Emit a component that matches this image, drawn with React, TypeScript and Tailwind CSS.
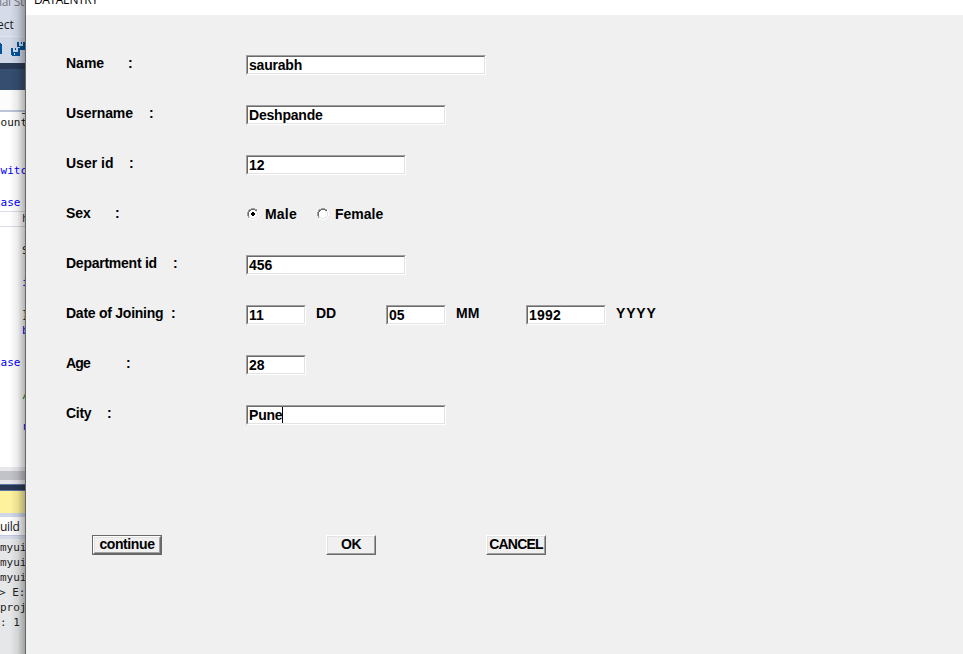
import React from "react";

const sans = "font-['Liberation_Sans',Arial,sans-serif]";
const mono = "font-['DejaVu_Sans_Mono',monospace]";

type FieldProps = { value: string; width: string; tracking?: string; caret?: boolean };

function Field({ value, width, tracking = "", caret = false }: FieldProps) {
  return (
    <div className={`h-5 shrink-0 border border-t-[#a0a0a0] border-l-[#a0a0a0] border-r-white border-b-white ${width}`}>
      <div className="flex h-[18px] border border-t-[#696969] border-l-[#696969] border-r-[#e3e3e3] border-b-[#e3e3e3] bg-white pl-px">
        <span className={`leading-4 ${tracking}`}>{value}</span>
        {caret && <span className="h-4 w-px bg-black" />}
      </div>
    </div>
  );
}

type RowProps = { label: string; labelWidth: string; tracking?: string; children: React.ReactNode };

function Row({ label, labelWidth, tracking = "", children }: RowProps) {
  return (
    <div className="flex h-5 items-start">
      <div className="flex w-[180px] shrink-0 leading-4">
        <span className={`shrink-0 ${labelWidth} ${tracking}`}>{label}</span>
        <span>:</span>
      </div>
      {children}
    </div>
  );
}

function Radio({ checked = false }: { checked?: boolean }) {
  return (
    <svg width="12" height="12" viewBox="0 0 12 12" shapeRendering="crispEdges" className="block shrink-0">
      <path fill="#fff" d="M4 2h4v1h1v1h1v4h-1v1h-1v1h-4v-1h-1v-1h-1v-4h1v-1h1z" />
      <path fill="#a0a0a0" d="M4 0h4v1h-4zM2 1h2v1h-2zM8 1h2v1h-2zM1 2h1v2h-1zM0 4h1v4h-1zM1 8h1v2h-1z" />
      <path fill="#696969" d="M4 1h4v1h-4zM2 2h2v1h-2zM8 2h2v1h-2zM2 3h1v1h-1zM1 4h1v4h-1z" />
      <path fill="#e3e3e3" d="M9 3h1v1h-1zM10 4h1v4h-1zM9 8h1v1h-1zM2 8h1v1h-1zM2 9h2v1h-2zM8 9h2v1h-2zM4 10h4v1h-4z" />
      <path fill="#fff" d="M10 2h1v2h-1zM11 4h1v4h-1zM10 8h1v2h-1zM8 10h2v1h-2zM4 11h4v1h-4zM2 10h2v1h-2z" />
      {checked && <path fill="#000" d="M5 4h2v1h1v2h-1v1h-2v-1h-1v-2h1z" />}
    </svg>
  );
}

type ButtonProps = { label: string; width: string; tracking?: string; focused?: boolean };

function Button({ label, width, tracking = "", focused = false }: ButtonProps) {
  const face = (
    <div className="h-full border border-t-white border-l-white border-r-[#696969] border-b-[#696969]">
      <div className="flex h-full justify-center border border-t-[#e3e3e3] border-l-[#e3e3e3] border-r-[#a0a0a0] border-b-[#a0a0a0]">
        <span className={`${focused ? "leading-[12px]" : "leading-[14px]"} ${tracking}`}>{label}</span>
      </div>
    </div>
  );
  return <div className={`h-5 shrink-0 ${width} ${focused ? "border border-[#696969]" : ""}`}>{face}</div>;
}

function SaveAllIcon() {
  return (
    <svg width="26" height="16" viewBox="0 0 26 16" shapeRendering="crispEdges" className="block">
      <path fill="#00539c" d="M0 2h1v1h1v10h-2z" />
      <path fill="#00539c" d="M17 1h2v4h4v-4h3v8h-6v-3h-3zM11 7h2v4h5v-4h2v8h-8l-1-1z" />
      <path fill="#00539c" d="M21 1h1v2h-1zM15 7h1v2h-1z" />
      <path fill="#d5dbe9" d="M14 12h1v2h-1z" />
    </svg>
  );
}

const code = [
  { text: "count", style: "h-12 -ml-[6px] text-[#111]" },
  { text: "switch", style: "h-8 -ml-[6px] text-[#0000ff]" },
  { text: "case", style: "h-4 -ml-[6px] text-[#0000ff]" },
  { text: "h", style: "h-8 ml-[22px] text-[#333]" },
  { text: "S", style: "h-8 ml-[22px] text-[#111]" },
  { text: "i", style: "h-8 ml-[22px] text-[#0000ff]" },
  { text: "}", style: "h-4 ml-[22px] text-[#111]" },
  { text: "b", style: "h-8 ml-[22px] text-[#0000ff]" },
  { text: "case", style: "h-8 -ml-[6px] text-[#0000ff]" },
  { text: "/", style: "h-8 ml-[22px] text-[#008000]" },
  { text: "r", style: "h-4 ml-[22px] text-[#0000ff]" },
];

function IdeStrip() {
  return (
    <div className="relative h-[654px] w-[26px] shrink-0 overflow-hidden whitespace-pre bg-[#e6e7e8]">
      <div className="h-[15px] overflow-hidden bg-[#d5dbe9] font-['Open_Sans',sans-serif] text-[12px] leading-4 text-[#777]">
        <div className="-mt-[6px] -ml-px tracking-[-0.3px]">ial Studio</div>
      </div>
      <div className="h-[21px] bg-[#d5dbe9] font-['Open_Sans',sans-serif] text-[12px] leading-[19px] text-[#1e1e1e]">
        <div className="-ml-[3px]">ect</div>
      </div>
      <div className="h-[27px] border-t border-[#dfe4ef] bg-[#d0d7e7] pt-[4px]"><SaveAllIcon /></div>
      <div className="h-[6px] bg-[#293955]" />
      <div className="flex h-[21px] justify-end bg-[#364e6f] pt-[6px]"><div className="h-[9px] w-px bg-[#4d6cbd]" /></div>
      <div className="h-[20px] bg-[#fcfcfc]" />
      <div className="h-[2px] bg-[#bcc5d8]" />
      <div className="h-[355px] bg-white">
        <div className="flex h-[3px] justify-end"><div className="mt-px h-px w-[4px] bg-[#444]" /></div>
        <div className={`text-[11px] leading-4 ${mono}`}>
          {code.map((c, i) => (
            <div key={i} className={i === 3 ? "h-8" : ""}>
              {i === 3 ? (
                <div className="h-4 border-y border-[#dcdce8] leading-[14px]">
                  <div className="ml-[22px] text-[#333]">{c.text}</div>
                </div>
              ) : (
                <div className={c.style}>{c.text}</div>
              )}
            </div>
          ))}
        </div>
      </div>
      <div className="h-[4px] bg-[#e8e8ec]" />
      <div className="h-[9px] bg-[#c2c3c9]" />
      <div className="h-[4px] bg-[#e8e8ec]" />
      <div className="h-[7px] border-t border-b border-[#5c76a5] bg-[#293955]" />
      <div className="h-[22px] bg-[#fff29d]" />
      <div className="h-[4px] bg-[#ced6e8]" />
      <div className="h-[18px] bg-[#fcfcfd] font-['Open_Sans',sans-serif] text-[12px] leading-[19px] tracking-[-0.3px] text-[#111]">uild</div>
      <div className="h-[4px] border-t border-[#c0c8e0] bg-[#d4daea]" />
      <div className={`bg-[#e6e7e8] pt-px text-[11px] leading-[15px] text-[#1e1e1e] ${mono}`}>
        <div>myui</div>
        <div>myui</div>
        <div>myui</div>
        <div className="-ml-px">&gt; E:</div>
        <div>proj</div>
        <div>: 1</div>
      </div>
      <div className="absolute inset-y-0 right-0 w-[16px] border-r border-[#666] bg-gradient-to-r from-black/0 via-black/8 to-black/30" />
    </div>
  );
}

export default function App() {
  return (
    <div className="flex h-[654px] w-[963px] overflow-hidden bg-[#f0f0f0]">
      <IdeStrip />
      <div className="min-w-0 flex-1 bg-[#f0f0f0]">
        <div className="h-[15px] overflow-hidden bg-white pl-[8px] font-['Open_Sans',sans-serif] text-[12px] leading-4 tracking-[-0.35px] text-black">
          <div className="-mt-[8px]">DATAENTRY</div>
        </div>
        <div className={`pt-[40px] pl-[40px] text-[14px] font-bold whitespace-pre text-black ${sans}`}>
          <div className="flex flex-col gap-[30px]">
            <Row label="Name" labelWidth="w-[62px]">
              <Field value="saurabh" width="w-[240px]" tracking="tracking-[-0.2px]" />
            </Row>
            <Row label="Username" labelWidth="w-[83px]" tracking="tracking-[-0.1px]">
              <Field value="Deshpande" width="w-[200px]" tracking="tracking-[-0.2px]" />
            </Row>
            <Row label="User id" labelWidth="w-[63px]">
              <Field value="12" width="w-[160px]" />
            </Row>
            <Row label="Sex" labelWidth="w-[49px]">
              <div className="flex items-start pt-px leading-4">
                <div className="w-[19px] pt-[2px] pl-px"><Radio checked /></div>
                <span className="w-[51px] tracking-[0.2px]">Male</span>
                <div className="w-[19px] pt-[2px] pl-px"><Radio /></div>
                <span>Female</span>
              </div>
            </Row>
            <Row label="Department id" labelWidth="w-[107px]" tracking="tracking-[-0.25px]">
              <Field value="456" width="w-[160px]" />
            </Row>
            <Row label="Date of Joining" labelWidth="w-[105px]" tracking="tracking-[-0.25px]">
              <Field value="11" width="w-[60px]" />
              <span className="w-[80px] pl-[10px] leading-4">DD</span>
              <Field value="05" width="w-[60px]" />
              <span className="w-[80px] pl-[10px] leading-4">MM</span>
              <Field value="1992" width="w-[80px]" tracking="tracking-[0.2px]" />
              <span className="pl-[10px] leading-4 tracking-[0.8px]">YYYY</span>
            </Row>
            <Row label="Age" labelWidth="w-[60px]" tracking="tracking-[-0.8px]">
              <Field value="28" width="w-[60px]" />
            </Row>
            <Row label="City" labelWidth="w-[41px]" tracking="tracking-[-0.3px]">
              <Field value="Pune" width="w-[200px]" tracking="tracking-[-0.2px]" caret />
            </Row>
          </div>
          <div className="mt-[110px] ml-[26px] flex">
            <div className="w-[234px]">
              <Button label="continue" width="w-[70px]" tracking="tracking-[-0.4px]" focused />
            </div>
            <div className="w-[160px]">
              <Button label="OK" width="w-[50px]" tracking="tracking-[-0.5px]" />
            </div>
            <Button label="CANCEL" width="w-[60px]" tracking="tracking-[-0.8px]" />
          </div>
        </div>
      </div>
    </div>
  );
}
